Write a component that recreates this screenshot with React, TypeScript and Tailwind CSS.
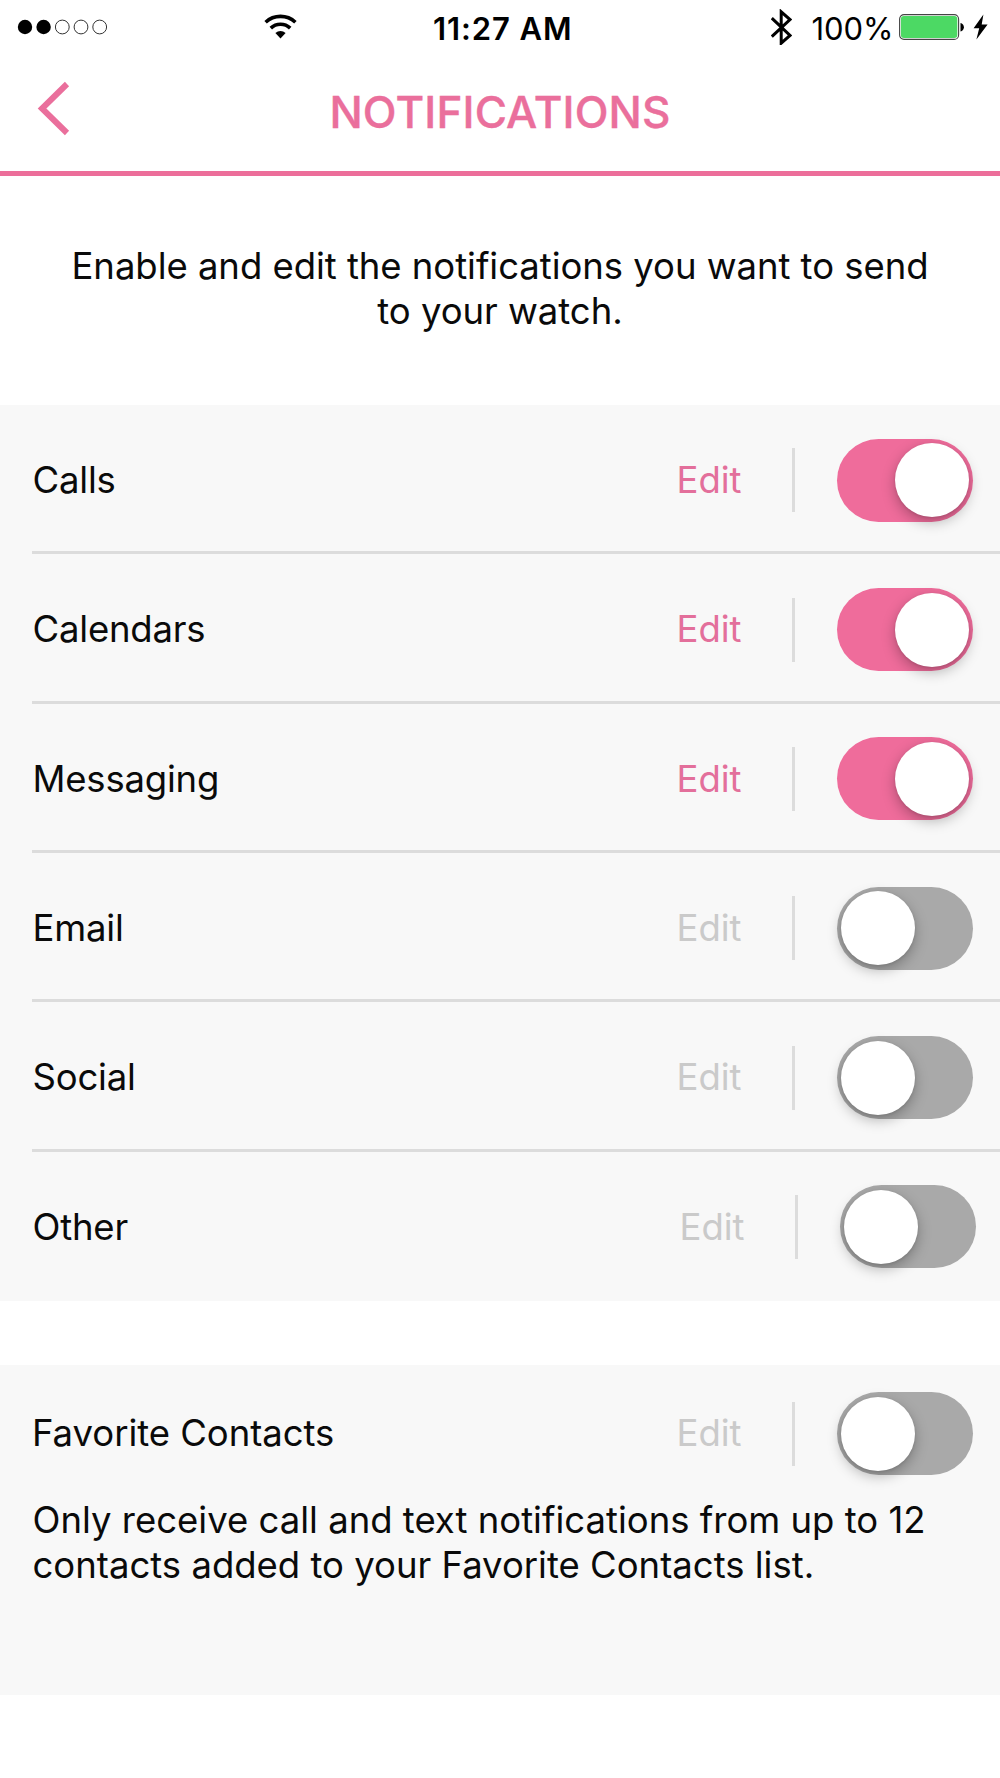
import { useState } from "react";
import clsx from "clsx";

interface NotificationSetting {
    id: string;
    label: string;
    enabled: boolean;
}

const initialSettings: NotificationSetting[] = [
    { id: "calls", label: "Calls", enabled: true },
    { id: "calendars", label: "Calendars", enabled: true },
    { id: "messaging", label: "Messaging", enabled: true },
    { id: "email", label: "Email", enabled: false },
    { id: "social", label: "Social", enabled: false },
    { id: "other", label: "Other", enabled: false },
];

const StatusBar = () => {
    return (
        <div className="grid h-[54px] grid-cols-[433px_1fr_433px] items-center text-[31px] leading-none text-black">
            <div className="flex items-center pl-[17px]">
                <svg className="h-4 w-[92px]" viewBox="0 0 92 16">
                    <circle cx="8" cy="8" r="7.2" />
                    <circle cx="26.6" cy="8" r="7.2" />
                    <g fill="none" stroke="#333" strokeWidth="1">
                        <circle cx="45.3" cy="8" r="6.9" />
                        <circle cx="64" cy="8" r="6.9" />
                        <circle cx="82.7" cy="8" r="6.9" />
                    </g>
                </svg>
                <svg className="ml-[155px] h-[26px] w-[34px]" viewBox="0 0 34 26">
                    <g fill="none" stroke="#000" strokeWidth="3.6">
                        <path d="M1.6 8.2a22 22 0 0 1 29.8 0" />
                        <path d="M6.8 14.1a14 14 0 0 1 19.4 0" />
                    </g>
                    <path d="M11.4 18.9a8 8 0 0 1 10.2 0L16.5 24.4z" />
                </svg>
            </div>
            <p className="whitespace-nowrap pt-[2px] font-semibold tracking-[0.9px]">11:27 AM</p>
            <div className="flex items-center pl-[203px]">
                <svg className="-ml-1 h-9 w-[21px] shrink-0" viewBox="0 0 21 36" fill="none" stroke="#000" strokeWidth="3">
                    <path d="M.8 9.2 19 26.4l-8.8 7.8V2.8L19 10.6.8 27.6" />
                </svg>
                <span className="ml-[19px] w-[80px] shrink-0 whitespace-nowrap pt-[2px]">100%</span>
                <svg className="ml-[8px] h-[26px] w-[67px] shrink-0" viewBox="0 0 67 26">
                    <rect x=".6" y=".6" width="59" height="24.8" rx="4.5" fill="#fff" stroke="#444" strokeWidth="1.1" />
                    <rect x="1.9" y="1.9" width="56.4" height="22.2" rx="3" fill="#4cd964" />
                    <path d="M61.5 9c2 .3 3.4 2 3.4 4.2s-1.4 3.9-3.4 4.2z" />
                </svg>
                <svg className="ml-[7px] h-[26px] w-[15px] shrink-0" viewBox="0 0 15 26">
                    <path d="M10.4.5.6 14.3h5.6L3.4 25.5 14.6 10.6H8.7z" />
                </svg>
            </div>
        </div>
    );
};

const Toggle = ({ on, onClick }: { on: boolean; onClick: () => void }) => {
    return (
        <button
            role="switch"
            aria-checked={on}
            onClick={onClick}
            className={clsx(
                "flex h-[83px] w-[136px] shrink-0 items-center rounded-full px-1",
                on ? "justify-end bg-[#ef6c9b]" : "justify-start bg-[#a9a9a9]",
            )}
        >
            <span className="size-[74px] rounded-full bg-white shadow-[0_5px_14px_rgba(0,0,0,0.28),0_1px_3px_rgba(0,0,0,0.1)]" />
        </button>
    );
};

const SettingControls = ({ on, onToggle }: { on: boolean; onToggle: () => void }) => {
    return (
        <div className="flex items-center">
            <button className={clsx("w-[115.5px] text-left", on ? "text-[#e36f9b]" : "text-[#cacaca]")}>Edit</button>
            <div className="mr-[42px] h-16 w-[3px] bg-[#dcdcdc]" />
            <Toggle on={on} onClick={onToggle} />
        </div>
    );
};

const App = () => {
    const [settings, setSettings] = useState(initialSettings);
    const [favorites, setFavorites] = useState(false);

    const toggleSetting = (id: string) => {
        setSettings(settings.map((s) => (s.id === id ? { ...s, enabled: !s.enabled } : s)));
    };

    return (
        <div className="h-[1778px] w-[1000px] overflow-hidden bg-white font-['Inter',sans-serif] text-[36.5px] leading-[44.5px] tracking-[-0.04px] text-[#0a0a0a]">
            <StatusBar />

            <header className="grid h-[122px] grid-cols-[100px_1fr_100px] items-center border-b-[5px] border-[#ec6e9a]">
                <button aria-label="Back" className="pb-[9px] pl-9">
                    <svg className="h-14 w-9" viewBox="0 0 36 56" fill="none" stroke="#ea6f9c" strokeWidth="6">
                        <path d="M31 4 6 28.5 31 53" />
                    </svg>
                </button>
                <h1 className="text-center text-[44px] font-medium tracking-[0.15px] text-[#ea6f9c] [-webkit-text-stroke:0.4px_#ea6f9c]">NOTIFICATIONS</h1>
            </header>

            <p className="h-[229px] px-[60px] pt-[68px] text-center">
                Enable and edit the notifications you want to send
                <br />
                to your watch.
            </p>

            <ul className="bg-[#f8f8f8] pl-8">
                {settings.map((setting) => (
                    <li
                        key={setting.id}
                        className="flex h-[149.35px] items-center justify-between border-b-[3px] border-[#dcdcdc] pr-[27px] pt-[4px] last:border-transparent last:pr-6"
                    >
                        <span className="pl-[0.5px] tracking-[-0.2px]">{setting.label}</span>
                        <SettingControls on={setting.enabled} onToggle={() => toggleSetting(setting.id)} />
                    </li>
                ))}
            </ul>

            <section className="mt-16 h-[330px] bg-[#f8f8f8] pl-8">
                <div className="flex h-[133px] items-center justify-between pr-[27px] pt-[4px]">
                    <span>Favorite Contacts</span>
                    <SettingControls on={favorites} onToggle={() => setFavorites(!favorites)} />
                </div>
                <p className="pl-[0.5px] tracking-normal">
                    Only receive call and text notifications from up to 12
                    <br />
                    contacts added to your Favorite Contacts list.
                </p>
            </section>
        </div>
    );
};

export default App;
